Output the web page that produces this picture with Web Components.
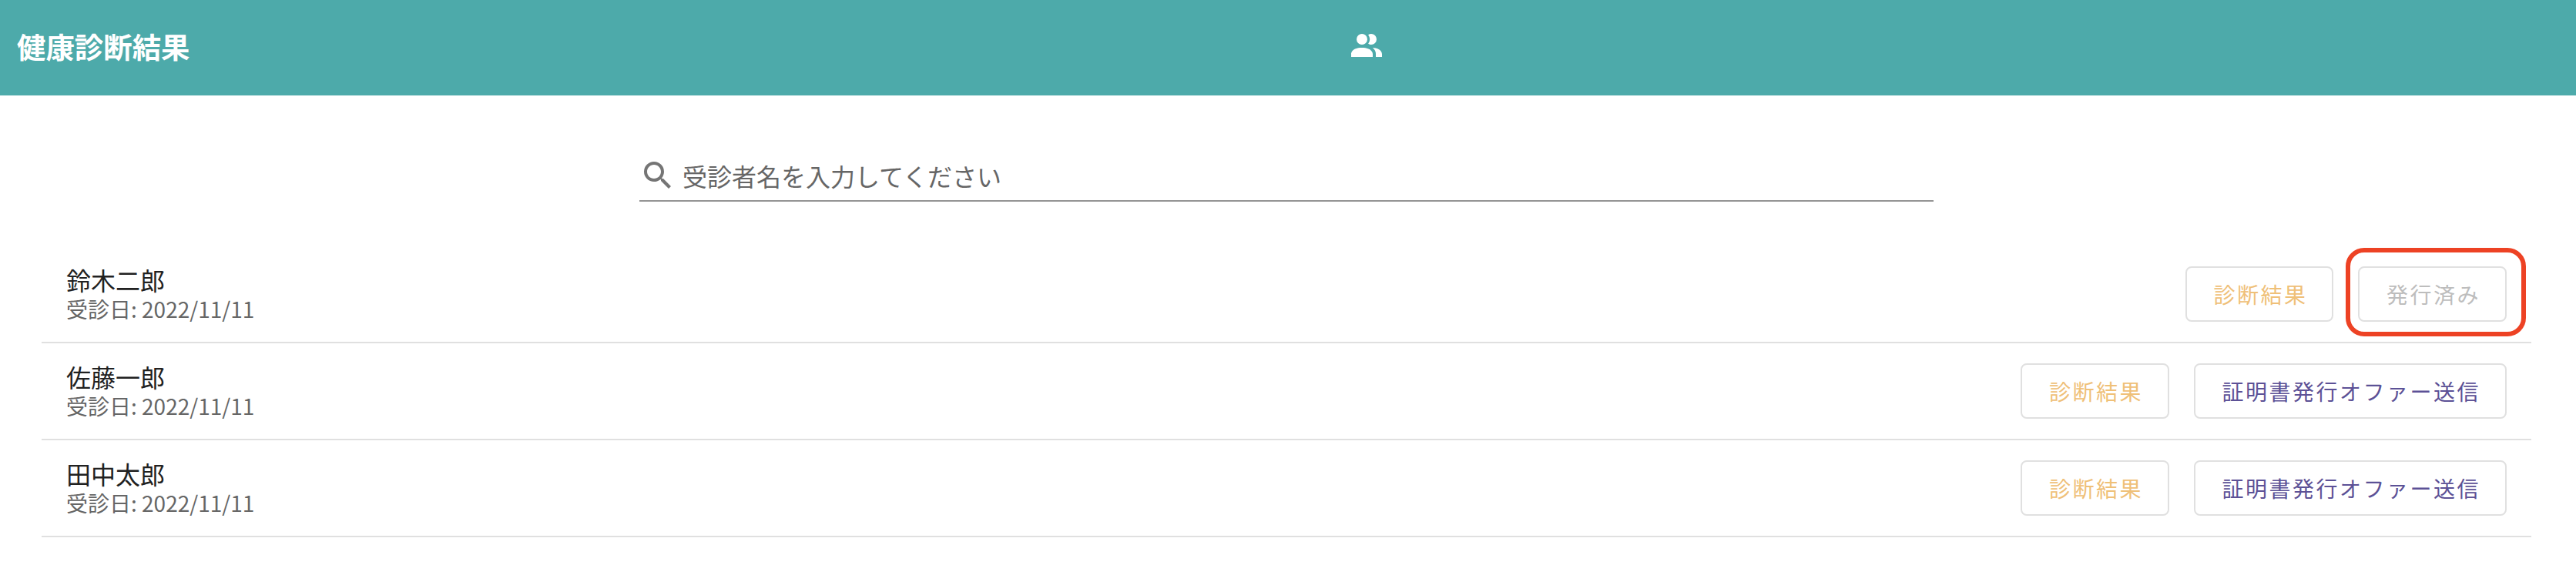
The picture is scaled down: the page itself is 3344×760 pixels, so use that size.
<!DOCTYPE html>
<html lang="ja">
<head>
<meta charset="UTF-8">
<title>健康診断結果</title>
<style>
    body { margin: 0; background: #fff; font-family: 'Noto Sans CJK JP', sans-serif; }
</style>
</head>
<body>
<checkup-app></checkup-app>

<script>
// Barra superior com titulo e icone
class AppHeader extends HTMLElement {
    constructor() {
        super();
        this.attachShadow({ mode: 'open' });
        this.shadowRoot.innerHTML = `
            <style>
                :host { display: flex; align-items: center; box-sizing: border-box; height: 124px; padding: 0 22px; background: #4daaaa; color: #fff; }
                h3 { flex: 0 0 1728px; margin: 0 0 4px; font-size: 37.44px; line-height: 56px; font-weight: 700; }
                svg { width: 48px; height: 48px; fill: currentColor; margin-bottom: 4px; }
            </style>
            <h3><slot></slot></h3>
            <svg viewBox="0 0 24 24"><path d="M16 17V19H2V17S2 13 9 13 16 17 16 17M12.5 7.5A3.5 3.5 0 1 0 9 11A3.5 3.5 0 0 0 12.5 7.5M15.94 13A5.32 5.32 0 0 1 18 17V19H22V17S22 13.37 15.94 13M15 4A3.39 3.39 0 0 0 13.07 4.59A5 5 0 0 1 13.07 10.41A3.39 3.39 0 0 0 15 11A3.5 3.5 0 0 0 15 4Z"/></svg>
        `;
    }
}
customElements.define('app-header', AppHeader);

class SearchField extends HTMLElement {
    constructor() {
        super();
        this.attachShadow({ mode: 'open' });
        this.shadowRoot.innerHTML = `
            <style>
                :host { display: flex; align-items: center; box-sizing: border-box; width: 1680px; height: 66px; border-bottom: 2px solid #949494; color: #666; font-size: 32px; line-height: 40px; }
                svg { width: 48px; height: 48px; fill: #757575; margin-right: 8px; }
            </style>
            <svg viewBox="0 0 24 24"><path d="M9.5,3A6.5,6.5 0 0,1 16,9.5C16,11.11 15.41,12.59 14.44,13.73L14.71,14H15.5L20.5,19L19,20.5L14,15.5V14.71L13.73,14.44C12.59,15.41 11.11,16 9.5,16A6.5,6.5 0 0,1 3,9.5A6.5,6.5 0 0,1 9.5,3M9.5,5C7,5 5,7 5,9.5C5,12 7,14 9.5,14C12,14 14,12 14,9.5C14,7 12,5 9.5,5Z"/></svg>
            <span>${this.getAttribute('placeholder') || ''}</span>
        `;
    }
}
customElements.define('search-field', SearchField);

class OutlinedButton extends HTMLElement {
    constructor() {
        super();
        this.attachShadow({ mode: 'open' });
        this.shadowRoot.innerHTML = `
            <style>
                :host { position: relative; display: block; }
                button { display: block; box-sizing: border-box; height: 72px; padding: 0 32px 0 34.5px; border: 2px solid #e0e0e0; border-radius: 8px; background: transparent; color: #efc078; font: 400 28px/68px 'Noto Sans CJK JP', sans-serif; letter-spacing: 2.5px; white-space: nowrap; }
                :host([color="indigo"]) button { color: #5c5196; }
                :host([disabled]) button { color: #bdbdbd; }
                /* Moldura de destaque em volta do botao */
                :host([highlight])::after { content: ''; position: absolute; inset: -24px -25px -19px -16px; box-sizing: border-box; border: 6px solid #ed4224; border-radius: 24px; }
            </style>
            <button><slot></slot></button>
        `;
    }
}
customElements.define('outlined-button', OutlinedButton);

class PatientRow extends HTMLElement {
    constructor() {
        super();
        this.attachShadow({ mode: 'open' });
        this.shadowRoot.innerHTML = `
            <style>
                :host { display: flex; align-items: center; justify-content: space-between; box-sizing: border-box; height: 126px; padding: 0 32px; border-bottom: 2px solid #e0e0e0; }
                .name { font-size: 32px; line-height: 38px; color: #212121; }
                .date { font-size: 28px; line-height: 38px; color: #666; }
                .actions { display: flex; gap: 32px; }
            </style>
            <div>
                <div class="name">${this.getAttribute('name')}</div>
                <div class="date">受診日: ${this.getAttribute('date')}</div>
            </div>
            <div class="actions"><slot></slot></div>
        `;
    }
}
customElements.define('patient-row', PatientRow);

class CheckupApp extends HTMLElement {
    constructor() {
        super();
        this.attachShadow({ mode: 'open' });
        this.shadowRoot.innerHTML = `
            <style>
                :host { display: block; }
                search-field { margin: 72px 0 0 830px; }
                main { margin: 58px 58px 0 54px; }
            </style>
            <app-header>健康診断結果</app-header>
            <search-field placeholder="受診者名を入力してください"></search-field>
            <main>
                <patient-row name="鈴木二郎" date="2022/11/11">
                    <outlined-button>診断結果</outlined-button>
                    <outlined-button disabled highlight>発行済み</outlined-button>
                </patient-row>
                <patient-row name="佐藤一郎" date="2022/11/11">
                    <outlined-button>診断結果</outlined-button>
                    <outlined-button color="indigo">証明書発行オファー送信</outlined-button>
                </patient-row>
                <patient-row name="田中太郎" date="2022/11/11">
                    <outlined-button>診断結果</outlined-button>
                    <outlined-button color="indigo">証明書発行オファー送信</outlined-button>
                </patient-row>
            </main>
        `;
    }
}
customElements.define('checkup-app', CheckupApp);
</script>
</body>
</html>
